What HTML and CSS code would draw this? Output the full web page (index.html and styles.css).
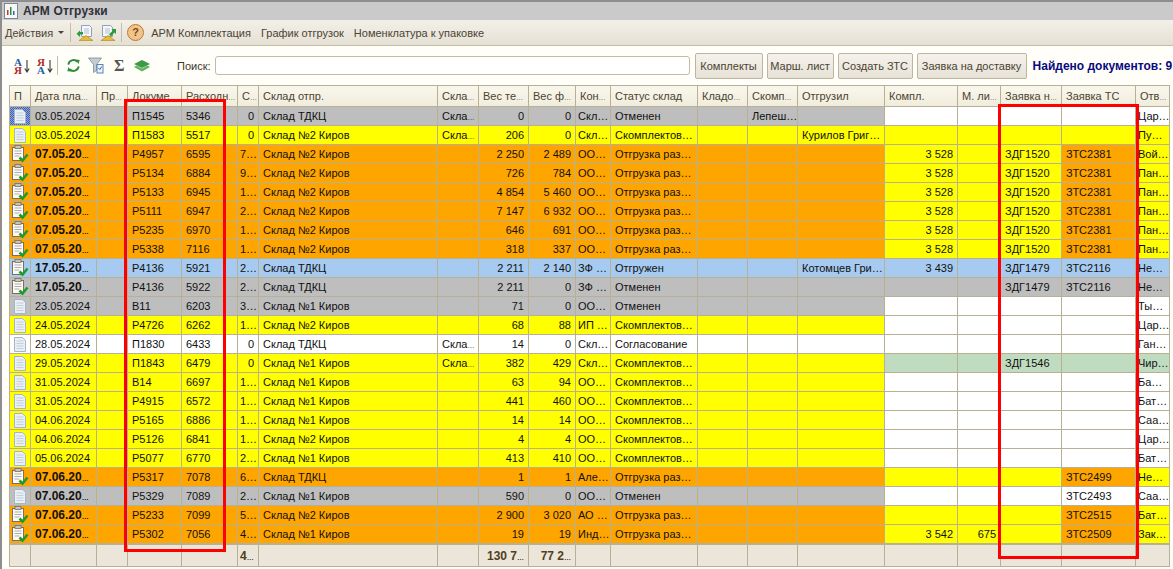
FILE: index.html
```html
<!DOCTYPE html>
<html lang="ru">
<head>
    <meta charset="UTF-8">
    <title>АРМ Отгрузки</title>
    <link rel="stylesheet" href="styles.css">
</head>
<body>
<svg class="defs" width="0" height="0">
    <symbol id="i-doc" viewBox="0 0 16 17">
        <path d="M2.500 1.500h8l3 3v11h-11z" fill="#e9eff5" stroke="#a5b5c5"/>
        <path d="M4.500 5h7M4.500 7.500h7M4.500 10h7M4.500 12.500h7" stroke="#c3cfda"/>
    </symbol>
    <symbol id="i-check" viewBox="0 0 18 18">
        <rect x="1.500" y="2.500" width="11" height="13" fill="#fbfaf5" stroke="#7a6e5c"/>
        <rect x="4" y="0.500" width="6" height="3" fill="#c4c4c4" stroke="#7a6e5c" stroke-width=".8"/>
        <path d="M3.500 6h7M3.500 8.500h7M3.500 11h5" stroke="#adadad"/>
        <path d="M8.500 12.500l3 3 5-6" fill="none" stroke="#1f9a2c" stroke-width="2.600"/>
    </symbol>
    <symbol id="i-send" viewBox="0 0 18 18">
        <path d="M5.500 1.500h8l2 2v9h-10z" fill="#f4f7fb" stroke="#8fa2b8"/>
        <path d="M8 5h5M8 7h5M8 9h5" stroke="#b3c0cf"/>
        <path d="M3 16.500l7-5 7 5z" fill="#e9b93a" stroke="#b98d20" stroke-width=".7"/>
        <path d="M7 8v2.500H4V13L0.500 9.800 4 6.500V8z" fill="#2f9a3a"/>
    </symbol>
    <symbol id="i-take" viewBox="0 0 18 18">
        <path d="M2.500 1.500h8l2 2v9h-10z" fill="#f4f7fb" stroke="#8fa2b8"/>
        <path d="M5 5h5M5 7h5M5 9h5" stroke="#b3c0cf"/>
        <path d="M1 16.500l7-5 7 5z" fill="#e9b93a" stroke="#b98d20" stroke-width=".7"/>
        <path d="M11.500 5h4.500v5l-1.600-1.400L11 12.500 9 10.500 12.600 6.800z" fill="#2f9a3a"/>
    </symbol>
    <symbol id="i-refresh" viewBox="0 0 16 16">
        <path d="M2.500 7A5.500 5.500 0 0 1 12 4" fill="none" stroke="#2e8b3a" stroke-width="2"/>
        <path d="M10 1.500l4.500 .5-1 4.500z" fill="#2e8b3a"/>
        <path d="M13.500 9A5.500 5.500 0 0 1 4 12" fill="none" stroke="#2e8b3a" stroke-width="2"/>
        <path d="M6 14.500l-4.500-.5 1-4.500z" fill="#2e8b3a"/>
    </symbol>
    <symbol id="i-filter" viewBox="0 0 16 17">
        <path d="M.5 1h13L8.500 7.500v6l-3 2v-8z" fill="#c5ccd3" stroke="#7f8a95" stroke-width=".8"/>
        <rect x="9" y="7.500" width="6" height="8.500" fill="#eef3f9" stroke="#5d84b5"/>
        <path d="M10.500 11l1.300 1.500 2-3" fill="none" stroke="#2b6cb0"/>
    </symbol>
    <symbol id="i-layers" viewBox="0 0 16 12">
        <path d="M0 4l8-4 8 4-8 4z" fill="#3f9a45"/>
        <path d="M0 7l2.500-1.400L8 8.500l5.500-2.900L16 7l-8 4.500z" fill="#63b564"/>
    </symbol>
    <symbol id="i-down" viewBox="0 0 6 14">
        <path d="M3 1v11M.8 9.500L3 13l2.200-3.500" fill="none" stroke="#3a3a3a" stroke-width="1.100"/>
    </symbol>
</svg>

<div class="page">
    <!-- Title -->
    <div class="titlebar">
        <svg class="app-icon" width="14" height="16" viewBox="0 0 14 16">
            <rect x=".5" y=".5" width="13" height="15" fill="#f7f7f7" stroke="#7b8794"/>
            <path d="M3 12V7h1.500v5z" fill="#c0392b"/>
            <path d="M6 12V4h1.500v8z" fill="#2e8b3a"/>
            <path d="M9 12V8h1.500v4z" fill="#2b6cb0"/>
        </svg>
        <span>АРМ Отгрузки</span>
    </div>

    <!-- Menu -->
    <div class="menubar">
        <span>Действия</span>
        <span class="menu-arrow"></span>
        <span class="sep sep-a"></span>
        <svg width="18" height="18"><use href="#i-send"/></svg>
        <svg class="ico-second" width="18" height="18"><use href="#i-take"/></svg>
        <span class="sep sep-b"></span>
        <span class="help">?</span>
        <span class="menu-link first">АРМ Комплектация</span>
        <span class="menu-link">График отгрузок</span>
        <span class="menu-link">Номенклатура к упаковке</span>
    </div>

    <!-- Search row -->
    <div class="toolbar">
        <span class="sort"><b class="blue">А</b><b class="red">Я</b></span>
        <svg width="6" height="14"><use href="#i-down"/></svg>
        <span class="sort second"><b class="red">Я</b><b class="blue">А</b></span>
        <svg width="6" height="14"><use href="#i-down"/></svg>
        <span class="sep tool-sep"></span>
        <svg width="15" height="15"><use href="#i-refresh"/></svg>
        <svg class="tool-filter" width="16" height="17"><use href="#i-filter"/></svg>
        <span class="sigma">Σ</span>
        <svg class="tool-layers" width="16" height="12"><use href="#i-layers"/></svg>
        <label class="search-label">Поиск:</label>
        <input class="search" type="text">
        <button class="btn w-kompl">Комплекты</button>
        <button class="btn w-marsh">Марш. лист</button>
        <button class="btn w-zts">Создать ЗТС</button>
        <button class="btn w-zayav">Заявка на доставку</button>
        <span class="found">Найдено документов: 9</span>
    </div>

    <table class="grid">
        <colgroup>
            <col class="c1"><col class="c2"><col class="c3"><col class="c4"><col class="c5">
            <col class="c6"><col class="c7"><col class="c8"><col class="c9"><col class="c10">
            <col class="c11"><col class="c12"><col class="c13"><col class="c14"><col class="c15">
            <col class="c16"><col class="c17"><col class="c18"><col class="c19"><col class="c20">
        </colgroup>
        <thead>
            <tr>
                <th>П</th><th>Дата пла<i class="el">…</i></th><th>Пр<i class="el">…</i></th><th>Докуме<i class="el">…</i></th><th>Расходн<i class="el">…</i></th>
                <th>С<i class="el">…</i></th><th>Склад отпр.</th><th>Скла<i class="el">…</i></th><th>Вес те<i class="el">…</i></th><th>Вес ф<i class="el">…</i></th>
                <th>Кон<i class="el">…</i></th><th>Статус склад</th><th>Кладо<i class="el">…</i></th><th>Скомп<i class="el">…</i></th><th>Отгрузил</th>
                <th>Компл.</th><th>М. ли<i class="el">…</i></th><th>Заявка н<i class="el">…</i></th><th>Заявка ТС</th><th>Отв<i class="el">…</i></th>
            </tr>
        </thead>
        <tbody>
            <tr class="gray">
                <td class="ic selected"><svg width="16" height="17"><use href="#i-doc"/></svg></td><td>03.05.2024</td><td></td><td>П1545</td><td>5346</td>
                <td class="n">0</td><td>Склад ТДКЦ</td><td>Скла<i class="el">…</i></td><td class="n">0</td><td class="n">0</td>
                <td class="t">Скл…</td><td>Отменен</td><td></td><td>Лепеш…</td><td></td>
                <td class="white"></td><td class="white"></td><td class="white"></td><td class="white"></td><td class="t white">Цар…</td>
            </tr>
            <tr class="yellow">
                <td class="ic"><svg width="16" height="17"><use href="#i-doc"/></svg></td><td>03.05.2024</td><td></td><td>П1583</td><td>5517</td>
                <td class="n">0</td><td>Склад №2 Киров</td><td>Скла<i class="el">…</i></td><td class="n">206</td><td class="n">0</td>
                <td class="t">Скл…</td><td>Скомплектов…</td><td></td><td></td><td>Курилов Григ…</td>
                <td></td><td></td><td></td><td></td><td class="t">Пу…</td>
            </tr>
            <tr class="orange">
                <td class="ic"><svg width="18" height="18"><use href="#i-check"/></svg></td><td class="b">07.05.20<i class="el">…</i></td><td></td><td>Р4957</td><td>6595</td>
                <td class="t">7…</td><td>Склад №2 Киров</td><td></td><td class="n">2 250</td><td class="n">2 489</td>
                <td class="t">ОО…</td><td>Отгрузка раз…</td><td></td><td></td><td></td>
                <td class="n yel">3 528</td><td class="yel"></td><td class="yel">ЗДГ1520</td><td>ЗТС2381</td><td class="t yel">Вой…</td>
            </tr>
            <tr class="orange">
                <td class="ic"><svg width="18" height="18"><use href="#i-check"/></svg></td><td class="b">07.05.20<i class="el">…</i></td><td></td><td>Р5134</td><td>6884</td>
                <td class="t">9…</td><td>Склад №2 Киров</td><td></td><td class="n">726</td><td class="n">784</td>
                <td class="t">ОО…</td><td>Отгрузка раз…</td><td></td><td></td><td></td>
                <td class="n yel">3 528</td><td class="yel"></td><td class="yel">ЗДГ1520</td><td>ЗТС2381</td><td class="t yel">Пан…</td>
            </tr>
            <tr class="orange">
                <td class="ic"><svg width="18" height="18"><use href="#i-check"/></svg></td><td class="b">07.05.20<i class="el">…</i></td><td></td><td>Р5133</td><td>6945</td>
                <td class="t">1…</td><td>Склад №2 Киров</td><td></td><td class="n">4 854</td><td class="n">5 460</td>
                <td class="t">ОО…</td><td>Отгрузка раз…</td><td></td><td></td><td></td>
                <td class="n yel">3 528</td><td class="yel"></td><td class="yel">ЗДГ1520</td><td>ЗТС2381</td><td class="t yel">Пан…</td>
            </tr>
            <tr class="orange">
                <td class="ic"><svg width="18" height="18"><use href="#i-check"/></svg></td><td class="b">07.05.20<i class="el">…</i></td><td></td><td>Р5111</td><td>6947</td>
                <td class="t">2…</td><td>Склад №2 Киров</td><td></td><td class="n">7 147</td><td class="n">6 932</td>
                <td class="t">ОО…</td><td>Отгрузка раз…</td><td></td><td></td><td></td>
                <td class="n yel">3 528</td><td class="yel"></td><td class="yel">ЗДГ1520</td><td>ЗТС2381</td><td class="t yel">Пан…</td>
            </tr>
            <tr class="orange">
                <td class="ic"><svg width="18" height="18"><use href="#i-check"/></svg></td><td class="b">07.05.20<i class="el">…</i></td><td></td><td>Р5235</td><td>6970</td>
                <td class="t">1…</td><td>Склад №2 Киров</td><td></td><td class="n">646</td><td class="n">691</td>
                <td class="t">ОО…</td><td>Отгрузка раз…</td><td></td><td></td><td></td>
                <td class="n yel">3 528</td><td class="yel"></td><td class="yel">ЗДГ1520</td><td>ЗТС2381</td><td class="t yel">Пан…</td>
            </tr>
            <tr class="orange">
                <td class="ic"><svg width="18" height="18"><use href="#i-check"/></svg></td><td class="b">07.05.20<i class="el">…</i></td><td></td><td>Р5338</td><td>7116</td>
                <td class="t">1…</td><td>Склад №2 Киров</td><td></td><td class="n">318</td><td class="n">337</td>
                <td class="t">ОО…</td><td>Отгрузка раз…</td><td></td><td></td><td></td>
                <td class="n yel">3 528</td><td class="yel"></td><td class="yel">ЗДГ1520</td><td>ЗТС2381</td><td class="t yel">Пан…</td>
            </tr>
            <tr class="blue-row">
                <td class="ic"><svg width="18" height="18"><use href="#i-check"/></svg></td><td class="b">17.05.20<i class="el">…</i></td><td></td><td>Р4136</td><td>5921</td>
                <td class="t">2…</td><td>Склад ТДКЦ</td><td></td><td class="n">2 211</td><td class="n">2 140</td>
                <td class="t">ЗФ …</td><td>Отгружен</td><td></td><td></td><td>Котомцев Гри…</td>
                <td class="n">3 439</td><td></td><td>ЗДГ1479</td><td>ЗТС2116</td><td class="t">Не…</td>
            </tr>
            <tr class="gray">
                <td class="ic"><svg width="18" height="18"><use href="#i-check"/></svg></td><td class="b">17.05.20<i class="el">…</i></td><td></td><td>Р4136</td><td>5922</td>
                <td class="t">2…</td><td>Склад ТДКЦ</td><td></td><td class="n">2 211</td><td class="n">0</td>
                <td class="t">ЗФ …</td><td>Отменен</td><td></td><td></td><td></td>
                <td></td><td></td><td>ЗДГ1479</td><td>ЗТС2116</td><td class="t">Не…</td>
            </tr>
            <tr class="gray">
                <td class="ic"><svg width="16" height="17"><use href="#i-doc"/></svg></td><td>23.05.2024</td><td></td><td>В11</td><td>6203</td>
                <td class="t">3…</td><td>Склад №1 Киров</td><td></td><td class="n">71</td><td class="n">0</td>
                <td class="t">ОО…</td><td>Отменен</td><td></td><td></td><td></td>
                <td class="white"></td><td class="white"></td><td class="white"></td><td class="white"></td><td class="t white">Ты…</td>
            </tr>
            <tr class="yellow">
                <td class="ic"><svg width="16" height="17"><use href="#i-doc"/></svg></td><td>24.05.2024</td><td></td><td>Р4726</td><td>6262</td>
                <td class="t">1…</td><td>Склад №2 Киров</td><td></td><td class="n">68</td><td class="n">88</td>
                <td class="t">ИП …</td><td>Скомплектов…</td><td></td><td></td><td></td>
                <td class="white"></td><td class="white"></td><td class="white"></td><td class="white"></td><td class="t white">Цар…</td>
            </tr>
            <tr class="white">
                <td class="ic"><svg width="16" height="17"><use href="#i-doc"/></svg></td><td>28.05.2024</td><td></td><td>П1830</td><td>6433</td>
                <td class="n">0</td><td>Склад ТДКЦ</td><td>Скла<i class="el">…</i></td><td class="n">14</td><td class="n">0</td>
                <td class="t">Скл…</td><td>Согласование</td><td></td><td></td><td></td>
                <td></td><td></td><td></td><td></td><td class="t">Ган…</td>
            </tr>
            <tr class="yellow">
                <td class="ic"><svg width="16" height="17"><use href="#i-doc"/></svg></td><td>29.05.2024</td><td></td><td>П1843</td><td>6479</td>
                <td class="n">0</td><td>Склад №1 Киров</td><td>Скла<i class="el">…</i></td><td class="n">382</td><td class="n">429</td>
                <td class="t">Скл…</td><td>Скомплектов…</td><td></td><td></td><td></td>
                <td class="green"></td><td class="green"></td><td class="green">ЗДГ1546</td><td class="green"></td><td class="t green">Чир…</td>
            </tr>
            <tr class="yellow">
                <td class="ic"><svg width="16" height="17"><use href="#i-doc"/></svg></td><td>31.05.2024</td><td></td><td>В14</td><td>6697</td>
                <td class="t">1…</td><td>Склад №1 Киров</td><td></td><td class="n">63</td><td class="n">94</td>
                <td class="t">ОО…</td><td>Скомплектов…</td><td></td><td></td><td></td>
                <td class="white"></td><td class="white"></td><td class="white"></td><td class="white"></td><td class="t white">Ба…</td>
            </tr>
            <tr class="yellow">
                <td class="ic"><svg width="16" height="17"><use href="#i-doc"/></svg></td><td>31.05.2024</td><td></td><td>Р4915</td><td>6572</td>
                <td class="t">1…</td><td>Склад №1 Киров</td><td></td><td class="n">441</td><td class="n">460</td>
                <td class="t">ОО…</td><td>Скомплектов…</td><td></td><td></td><td></td>
                <td class="white"></td><td class="white"></td><td class="white"></td><td class="white"></td><td class="t white">Бат…</td>
            </tr>
            <tr class="yellow">
                <td class="ic"><svg width="16" height="17"><use href="#i-doc"/></svg></td><td>04.06.2024</td><td></td><td>Р5165</td><td>6886</td>
                <td class="t">1…</td><td>Склад №1 Киров</td><td></td><td class="n">14</td><td class="n">14</td>
                <td class="t">ОО…</td><td>Скомплектов…</td><td></td><td></td><td></td>
                <td class="white"></td><td class="white"></td><td class="white"></td><td class="white"></td><td class="t white">Саа…</td>
            </tr>
            <tr class="yellow">
                <td class="ic"><svg width="16" height="17"><use href="#i-doc"/></svg></td><td>04.06.2024</td><td></td><td>Р5126</td><td>6841</td>
                <td class="t">1…</td><td>Склад №2 Киров</td><td></td><td class="n">4</td><td class="n">4</td>
                <td class="t">ОО…</td><td>Скомплектов…</td><td></td><td></td><td></td>
                <td class="white"></td><td class="white"></td><td class="white"></td><td class="white"></td><td class="t white">Цар…</td>
            </tr>
            <tr class="yellow">
                <td class="ic"><svg width="16" height="17"><use href="#i-doc"/></svg></td><td>05.06.2024</td><td></td><td>Р5077</td><td>6770</td>
                <td class="t">2…</td><td>Склад №1 Киров</td><td></td><td class="n">413</td><td class="n">410</td>
                <td class="t">ОО…</td><td>Скомплектов…</td><td></td><td></td><td></td>
                <td class="white"></td><td class="white"></td><td class="white"></td><td class="white"></td><td class="t white">Бат…</td>
            </tr>
            <tr class="orange">
                <td class="ic"><svg width="18" height="18"><use href="#i-check"/></svg></td><td class="b">07.06.20<i class="el">…</i></td><td></td><td>Р5317</td><td>7078</td>
                <td class="t">6…</td><td>Склад ТДКЦ</td><td></td><td class="n">1</td><td class="n">1</td>
                <td class="t">Але…</td><td>Отгрузка раз…</td><td></td><td></td><td></td>
                <td class="yel"></td><td class="yel"></td><td class="yel"></td><td>ЗТС2499</td><td class="t yel">Не…</td>
            </tr>
            <tr class="gray">
                <td class="ic"><svg width="16" height="17"><use href="#i-doc"/></svg></td><td class="b">07.06.20<i class="el">…</i></td><td></td><td>Р5329</td><td>7089</td>
                <td class="t">2…</td><td>Склад №1 Киров</td><td></td><td class="n">590</td><td class="n">0</td>
                <td class="t">ОО…</td><td>Отменен</td><td></td><td></td><td></td>
                <td class="white"></td><td class="white"></td><td class="white"></td><td class="white">ЗТС2493</td><td class="t white">Саа…</td>
            </tr>
            <tr class="orange">
                <td class="ic"><svg width="18" height="18"><use href="#i-check"/></svg></td><td class="b">07.06.20<i class="el">…</i></td><td></td><td>Р5233</td><td>7099</td>
                <td class="t">5…</td><td>Склад №2 Киров</td><td></td><td class="n">2 900</td><td class="n">3 020</td>
                <td class="t">АО …</td><td>Отгрузка раз…</td><td></td><td></td><td></td>
                <td class="yel"></td><td class="yel"></td><td class="yel"></td><td>ЗТС2515</td><td class="t yel">Бат…</td>
            </tr>
            <tr class="orange">
                <td class="ic"><svg width="18" height="18"><use href="#i-check"/></svg></td><td class="b">07.06.20<i class="el">…</i></td><td></td><td>Р5302</td><td>7056</td>
                <td class="t">4…</td><td>Склад №1 Киров</td><td></td><td class="n">19</td><td class="n">19</td>
                <td class="t">Инд…</td><td>Отгрузка раз…</td><td></td><td></td><td></td>
                <td class="n yel">3 542</td><td class="n yel">675</td><td class="yel"></td><td>ЗТС2509</td><td class="t yel">Зак…</td>
            </tr>
        </tbody>
        <tfoot>
            <tr>
                <td></td><td></td><td></td><td></td><td></td>
                <td class="t">4<i class="el">…</i></td><td></td><td></td><td class="n">130 7<i class="el">…</i></td><td class="n">77 2<i class="el">…</i></td>
                <td></td><td></td><td></td><td></td><td></td>
                <td></td><td></td><td></td><td></td><td></td>
            </tr>
        </tfoot>
    </table>

    <!-- Red marks over the grid -->
    <div class="mark mark-left"></div>
    <div class="mark mark-right"></div>
</div>
</body>
</html>
```

FILE: styles.css
```css
/* General */
html, body {
    margin: 0;
    padding: 0;
    height: 569px;
    overflow: hidden;
    background: #fffef9;
}

body {
    font-family: "Liberation Sans", Arial, sans-serif;
    font-size: 11px;
    color: #111;
}

.defs {
    position: absolute;
}

.page {
    position: relative;
    width: 1173px;
    height: 569px;
    overflow: hidden;
    border-left: 2px solid #8e8e8e;
    box-sizing: border-box;
}

/* Narrow dots for cut-off values */
.el {
    font-style: normal;
    font-size: 7px;
    line-height: 0;
}

/* Title */
.titlebar {
    display: flex;
    align-items: center;
    gap: 5px;
    height: 18px;
    padding-left: 2px;
    border-top: 2px solid #8e8e8e;
    background: #cacaca;
    font-size: 12px;
    letter-spacing: .15px;
    font-weight: bold;
    color: #2f3038;
}

/* Menu */
.menubar {
    display: flex;
    align-items: center;
    height: 25px;
    padding-left: 3px;
    border-bottom: 1px solid #c6bda3;
    background: linear-gradient(#f3f0e9, #e5e0d4);
    color: #4a4432;
}

.menu-arrow {
    width: 0;
    height: 0;
    margin-left: 5px;
    border-left: 3px solid transparent;
    border-right: 3px solid transparent;
    border-top: 3px solid #4a4432;
}

.sep {
    width: 1px;
    height: 19px;
    background: #c6bda3;
}

.sep-a {
    margin: 0 5px 0 6px;
}

.sep-b {
    margin: 0 5px 0 3px;
}

.ico-second {
    margin-left: 6px;
}

.help {
    width: 15px;
    height: 15px;
    border: 1px solid #b9783a;
    border-radius: 50%;
    background: #f3c48a;
    color: #7c4a16;
    font-weight: bold;
    font-size: 11px;
    line-height: 15px;
    text-align: center;
}

.menu-link {
    margin-left: 10px;
}

.menu-link.first {
    margin-left: 7px;
}

/* Search row */
.toolbar {
    display: flex;
    align-items: center;
    height: 39px;
    padding-left: 12px;
    white-space: nowrap;
}

.sort {
    display: flex;
    flex-direction: column;
    width: 10px;
    font-family: "Liberation Serif", serif;
    font-size: 11px;
    line-height: 8px;
}

.sort.second {
    margin-left: 7px;
}

.blue {
    color: #1f5fa8;
}

.red {
    color: #b02a2a;
}

.tool-sep {
    margin: 0 8px 0 4px;
}

.tool-filter {
    margin-left: 7px;
}

.sigma {
    width: 12px;
    margin-left: 10px;
    font-family: "Liberation Serif", serif;
    font-size: 16px;
    font-weight: bold;
    color: #555;
}

.tool-layers {
    margin-left: 8px;
}

.search-label {
    margin-left: 27px;
    color: #3c382c;
}

.search {
    width: 475px;
    height: 19px;
    margin-left: 4px;
    padding: 0;
    border: 1px solid #c2bba6;
    border-radius: 3px;
    background: #fff;
    box-sizing: border-box;
}

.btn {
    height: 26px;
    margin-left: 4px;
    padding: 0;
    border: 1px solid #bdb59f;
    border-radius: 2px;
    background: linear-gradient(#f5f2ec, #e7e2d7);
    font-family: inherit;
    font-size: 11px;
    color: #4a4432;
    box-sizing: border-box;
}

.w-kompl { width: 68px; margin-left: 5px; }
.w-marsh { width: 67px; }
.w-zts { width: 75px; }
.w-zayav { width: 110px; }

.found {
    margin-left: 6px;
    font-size: 12px;
    font-weight: bold;
    color: #0a0a80;
}

/* Grid */
.grid {
    width: 1161px;
    margin-left: 7px;
    table-layout: fixed;
    border-collapse: separate;
    border-spacing: 0;
    border-top: 1px solid #b8b094;
    border-left: 1px solid #b8b094;
    box-sizing: border-box;
}

.c1 { width: 21px; }
.c2 { width: 66px; }
.c3 { width: 31px; }
.c4 { width: 54px; }
.c5 { width: 56px; }
.c6 { width: 21px; }
.c7 { width: 179px; }
.c8 { width: 41px; }
.c9 { width: 50px; }
.c10 { width: 47px; }
.c11 { width: 35px; }
.c12 { width: 87px; }
.c13 { width: 50px; }
.c14 { width: 50px; }
.c15 { width: 87px; }
.c16 { width: 73px; }
.c17 { width: 43px; }
.c18 { width: 61px; }
.c19 { width: 74px; }
.c20 { width: 34px; }

.grid th, .grid td {
    padding: 1px 0 0 4px;
    border-right: 1px solid #b8b094;
    border-bottom: 1px solid #b8b094;
    overflow: hidden;
    white-space: nowrap;
    text-align: left;
    font-weight: normal;
}

.grid th {
    height: 19px;
    line-height: 19px;
    background: linear-gradient(#f9f7ec, #f1eddd);
    color: #4a4432;
}

.grid td {
    height: 17px;
    line-height: 17px;
}

.grid td.n {
    text-align: right;
    padding-right: 4px;
}

.grid td.t {
    padding-left: 2px;
}

.grid td.b {
    font-weight: bold;
    font-size: 12px;
}

.grid td.ic {
    padding: 0;
    line-height: 0;
}

.grid td.ic svg {
    display: block;
    margin: 0 auto;
}

.grid td.selected {
    background: repeating-conic-gradient(#3f63b5 0 25%, #8ba3d8 0 50%) 0 0 / 2px 2px;
}

/* Row and cell colours */
.gray { background: #bebebe; }
.yellow { background: #ffff00; }
.orange { background: #ffa500; }
.blue-row { background: #a6caf0; }
.white { background: #fff; }

.grid td.white { background: #fff; }
.grid td.yel { background: #ffff00; }
.grid td.green { background: #c0dcc0; }

.grid tfoot td {
    height: 20px;
    line-height: 20px;
    border-top: 1px solid #b8b094;
    background: #ebe5da;
    font-size: 12px;
    font-weight: bold;
    color: #4f3f1c;
}

/* Red marks */
.mark {
    position: absolute;
    border: 3px solid #ff0000;
    box-sizing: border-box;
}

.mark-left {
    left: 122px;
    top: 99px;
    width: 102px;
    height: 453px;
}

.mark-right {
    left: 996px;
    top: 104px;
    width: 141px;
    height: 455px;
}
```
